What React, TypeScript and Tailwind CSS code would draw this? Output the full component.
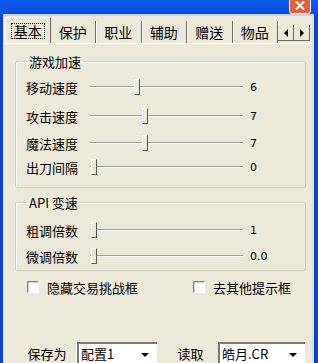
import React from 'react'

const cjk = '"Noto Sans CJK SC", "Noto Sans", sans-serif'
const num = '"DejaVu Sans", "Liberation Sans", sans-serif'

type Row = { label: string; thumb: number; value: string }

const speedRows: Row[] = [
  { label: '移动速度', thumb: 44, value: '6' },
  { label: '攻击速度', thumb: 52, value: '7' },
  { label: '魔法速度', thumb: 52, value: '7' },
  { label: '出刀间隔', thumb: 1, value: '0' },
]

const apiRows: Row[] = [
  { label: '粗调倍数', thumb: 1, value: '1' },
  { label: '微调倍数', thumb: 1, value: '0.0' },
]

const tabs = ['保护', '职业', '辅助', '赠送', '物品']

function Slider({ row, className }: { row: Row; className?: string }) {
  return (
    <div className={`flex h-[20px] items-center ${className ?? ''}`}>
      <span className="w-[64px] shrink-0 text-[13px] leading-none text-black">{row.label}</span>
      <div className="relative h-[20px] w-[153px] shrink-0">
        <div className="absolute left-0 right-0 top-[9px] h-[2px] border-t border-b border-t-[#9d9d93] border-b-white" />
        {/* thumb position comes from the row data */}
        <div
          className="absolute top-[2px] h-[16px] w-[6px] border-t border-l border-r border-b border-t-white border-l-white border-r-[#55554d] border-b-[#55554d] bg-[#ece9d8]"
          style={{ left: row.thumb }}
        />
      </div>
      <span className="ml-[7px] text-[11px] leading-none text-black" style={{ fontFamily: num }}>
        {row.value}
      </span>
    </div>
  )
}

function Group({ title, children, className }: { title: string; children: React.ReactNode; className?: string }) {
  return (
    <fieldset
      className={`ml-[12px] w-[291px] rounded-[2px] border border-[#d0d0bf] px-[10px] shadow-[inset_1px_1px_0_#fff] ${className ?? ''}`}
    >
      <legend className="ml-[1px] px-[2px] text-[13px] leading-[13px] text-black">{title}</legend>
      {children}
    </fieldset>
  )
}

function Check({ label, className }: { label: string; className?: string }) {
  return (
    <div className={`flex items-center ${className ?? ''}`}>
      <div className="h-[12px] w-[12px] border-t border-l border-t-[#808080] border-l-[#808080] border-r border-b border-r-white border-b-white bg-white shadow-[inset_1px_1px_0_#d4d0c8]" />
      <span className="ml-[8px] text-[13px] leading-none text-black">{label}</span>
    </div>
  )
}

function Combo({ text, className }: { text: string; className?: string }) {
  return (
    <div
      className={`flex h-[24px] items-start border-t-2 border-l-2 border-t-[#7a7a72] border-l-[#7a7a72] bg-white pl-[2px] pr-[8px] pt-[3px] ${className ?? ''}`}
    >
      <span className="flex-1 text-[13px] leading-none text-black">{text}</span>
      <span className="mt-[6px] h-0 w-0 border-l-[4px] border-r-[4px] border-t-[4px] border-l-transparent border-r-transparent border-t-black" />
    </div>
  )
}

export default function App() {
  return (
    <div className="flex h-[363px] w-[318px] flex-col overflow-hidden bg-[#0b4ed6]" style={{ fontFamily: cjk }}>
      {/* title bar strip */}
      <div className="relative h-[14px] shrink-0 bg-gradient-to-b from-[#0c5cf0] to-[#0a4ee0]">
        <div className="absolute right-[7px] top-[-6px] flex h-[20px] w-[22px] items-end justify-center rounded-[3px] border border-white bg-[#e2603c] pb-[3px]">
          <svg width="10" height="9" viewBox="0 0 10 9">
            <path d="M1 0.5 L9 8.5 M9 0.5 L1 8.5" stroke="#fff" strokeWidth="2" />
          </svg>
        </div>
      </div>
      <div className="flex min-h-0 flex-1">
        <div className="w-[3px] shrink-0 bg-[#0a46cc]" />
        <div className="flex min-h-0 flex-1 flex-col overflow-hidden border-t-2 border-t-[#c9d7f2] bg-[#ece9d8]">
          {/* tab strip */}
          <div className="flex h-[28px] shrink-0 items-end border-b border-b-white">
            <div className="ml-[2px] flex h-[26px] w-[46px] items-center justify-center border-t border-l border-r border-t-white border-l-white border-r-[#716f64] bg-[#ece9d8]">
              <span className="border border-dotted border-black px-[2px] text-[14px] leading-[14px]">基本</span>
            </div>
            {tabs.map(t => (
              <div
                key={t}
                className="flex h-[22px] w-[46px] items-center justify-center border-r border-r-[#716f64] text-[14px] leading-none text-black shadow-[1px_0_0_#fff]"
              >
                {t}
              </div>
            ))}
            <div className="mb-[2px] ml-auto mr-[2px] flex h-[16px]">
              <div className="flex w-[16px] items-center justify-center border-r border-b border-r-[#716f64] border-b-[#716f64] bg-[#ece9d8]">
                <span className="h-0 w-0 border-t-[4px] border-b-[4px] border-r-[4px] border-t-transparent border-b-transparent border-r-black" />
              </div>
              <div className="flex w-[16px] items-center justify-center border-r border-b border-r-[#716f64] border-b-[#716f64] bg-[#ece9d8]">
                <span className="h-0 w-0 border-t-[4px] border-b-[4px] border-l-[4px] border-t-transparent border-b-transparent border-l-black" />
              </div>
            </div>
          </div>

          <Group title="游戏加速" className="mt-[11px] pb-[10px]">
            <Slider row={speedRows[0]} className="mt-[9px]" />
            <Slider row={speedRows[1]} className="mt-[9px]" />
            <Slider row={speedRows[2]} className="mt-[7px]" />
            <Slider row={speedRows[3]} className="mt-[4px]" />
          </Group>

          <Group title="API 变速" className="mt-[8px] pb-[4px]">
            <Slider row={apiRows[0]} className="mt-[11px]" />
            <Slider row={apiRows[1]} className="mt-[6px]" />
          </Group>

          <div className="mt-[8px] flex h-[16px] items-center">
            <Check label="隐藏交易挑战框" className="ml-[24px]" />
            <Check label="去其他提示框" className="ml-[55px]" />
          </div>

          <div className="mb-[-3px] mt-auto flex h-[24px] shrink-0 items-start">
            <div className="ml-[15px] flex h-[24px] w-[59px] items-start justify-center border-r border-r-white pt-[5px] text-[13px] leading-none text-black">
              保存为
            </div>
            <Combo text="配置1" className="w-[80px]" />
            <div className="ml-[6px] flex h-[24px] w-[55px] items-start justify-center pt-[5px] text-[13px] leading-none text-black">
              读取
            </div>
            <Combo text="皓月.CR" className="w-[87px]" />
          </div>
        </div>
        <div className="w-[6px] shrink-0 border-l-2 border-l-[#d7def0] bg-[#0a46cc]" />
      </div>
    </div>
  )
}
